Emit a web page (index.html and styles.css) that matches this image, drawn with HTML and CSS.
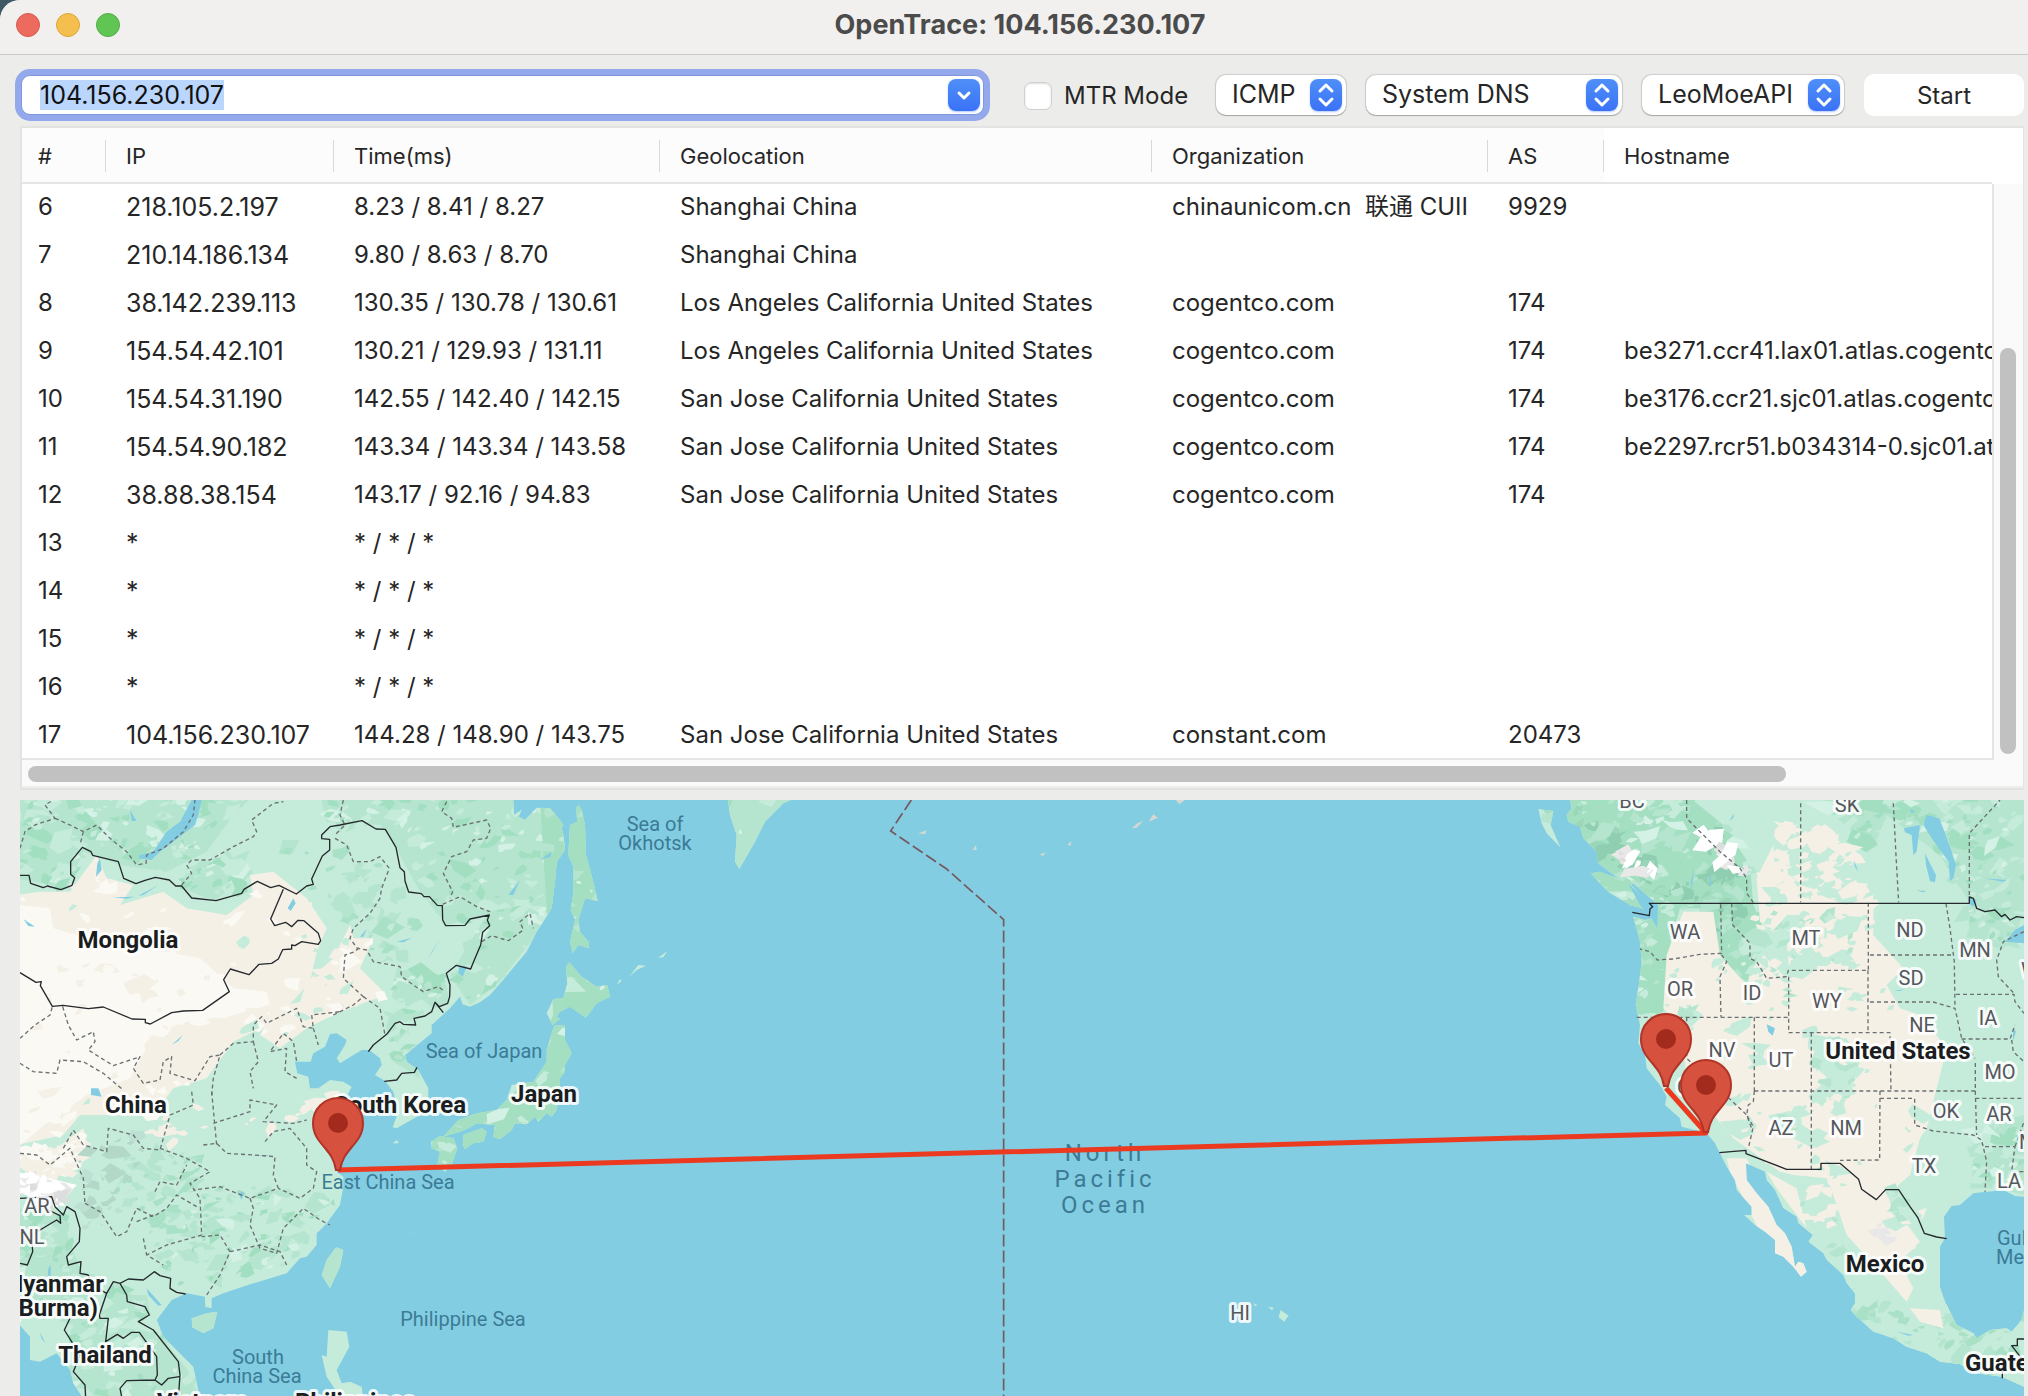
FILE: index.html
```html
<!DOCTYPE html>
<html lang="en">
<head>
<meta charset="utf-8">
<title>OpenTrace: 104.156.230.107</title>
<link rel="stylesheet" href="styles.css">
</head>
<body>
<div class="window">
  <header class="titlebar">
    <div class="lights">
      <button class="light light-close" aria-label="Close"></button>
      <button class="light light-min" aria-label="Minimize"></button>
      <button class="light light-zoom" aria-label="Zoom"></button>
    </div>
    <h1 class="title">OpenTrace: 104.156.230.107</h1>
  </header>

  <form class="toolbar" onsubmit="return false">
    <div class="combo">
      <input class="combo-input" id="target" type="text" value="104.156.230.107" aria-label="Target" autocomplete="off" spellcheck="false">
      <button class="knob" type="button" aria-label="History">
        <svg viewBox="0 0 32 32"><path d="M11 14l5 5 5-5"/></svg>
      </button>
    </div>
    <label class="check"><input class="check-box" type="checkbox"><span>MTR Mode</span></label>
    <div class="pick pick-protocol">
      <select aria-label="Protocol"><option>ICMP</option><option>TCP</option></select>
      <span class="knob"><svg viewBox="0 0 32 32"><path d="M10 12l6-6 6 6M10 20l6 6 6-6"/></svg></span>
    </div>
    <div class="pick pick-dns">
      <select aria-label="Resolver"><option>System DNS</option></select>
      <span class="knob"><svg viewBox="0 0 32 32"><path d="M10 12l6-6 6 6M10 20l6 6 6-6"/></svg></span>
    </div>
    <div class="pick pick-api">
      <select aria-label="Data source"><option>LeoMoeAPI</option></select>
      <span class="knob"><svg viewBox="0 0 32 32"><path d="M10 12l6-6 6 6M10 20l6 6 6-6"/></svg></span>
    </div>
    <button class="start" type="submit">Start</button>
  </form>

  <section class="panel">
    <div class="grid">
      <table class="hops">
        <colgroup><col class="c-no"><col class="c-ip"><col class="c-time"><col class="c-geo"><col class="c-org"><col class="c-as"><col></colgroup>
        <thead>
          <tr><th>#</th><th>IP</th><th>Time(ms)</th><th>Geolocation</th><th>Organization</th><th>AS</th><th>Hostname</th></tr>
        </thead>
        <tbody>
          <tr><td>6</td><td>218.105.2.197</td><td>8.23 / 8.41 / 8.27</td><td>Shanghai China</td><td>chinaunicom.cn&nbsp; 联通 CUII</td><td>9929</td><td></td></tr>
          <tr><td>7</td><td>210.14.186.134</td><td>9.80 / 8.63 / 8.70</td><td>Shanghai China</td><td></td><td></td><td></td></tr>
          <tr><td>8</td><td>38.142.239.113</td><td>130.35 / 130.78 / 130.61</td><td>Los Angeles California United States</td><td>cogentco.com</td><td>174</td><td></td></tr>
          <tr><td>9</td><td>154.54.42.101</td><td>130.21 / 129.93 / 131.11</td><td>Los Angeles California United States</td><td>cogentco.com</td><td>174</td><td>be3271.ccr41.lax01.atlas.cogentco.com</td></tr>
          <tr><td>10</td><td>154.54.31.190</td><td>142.55 / 142.40 / 142.15</td><td>San Jose California United States</td><td>cogentco.com</td><td>174</td><td>be3176.ccr21.sjc01.atlas.cogentco.com</td></tr>
          <tr><td>11</td><td>154.54.90.182</td><td>143.34 / 143.34 / 143.58</td><td>San Jose California United States</td><td>cogentco.com</td><td>174</td><td>be2297.rcr51.b034314-0.sjc01.atlas.cogentco.com</td></tr>
          <tr><td>12</td><td>38.88.38.154</td><td>143.17 / 92.16 / 94.83</td><td>San Jose California United States</td><td>cogentco.com</td><td>174</td><td></td></tr>
          <tr><td>13</td><td>*</td><td>* / * / *</td><td></td><td></td><td></td><td></td></tr>
          <tr><td>14</td><td>*</td><td>* / * / *</td><td></td><td></td><td></td><td></td></tr>
          <tr><td>15</td><td>*</td><td>* / * / *</td><td></td><td></td><td></td><td></td></tr>
          <tr><td>16</td><td>*</td><td>* / * / *</td><td></td><td></td><td></td><td></td></tr>
          <tr><td>17</td><td>104.156.230.107</td><td>144.28 / 148.90 / 143.75</td><td>San Jose California United States</td><td>constant.com</td><td>20473</td><td></td></tr>
        </tbody>
      </table>
    </div>
    <div class="vbar"><div class="vbar-head"></div><div class="vbar-track"><div class="vbar-thumb"></div></div></div>
    <div class="hbar"><div class="hbar-thumb"></div></div>
  </section>

  <main class="map">
    <svg class="map-svg" viewBox="20 800 2004 596" preserveAspectRatio="xMidYMid slice" role="img" aria-label="Route map">
      <defs>
        <clipPath id="land">
          <path d="M-10,0L1480,0 1480,15 1482,60 1505,45 1495,65 1515,75 1550,38 1590,40 1620,75 1630,90 1625,100 1630,120 1635,165 1610,200 1605,260 1595,340 1550,410 1520,470 1445,560 1410,600 1380,622 1350,635 1328,628 1320,605 1290,640 1235,690 1235,715 1155,780 1160,800 1195,825 1225,880 1225,925 1200,960 1130,1000 1118,997 1135,950 1120,890 1095,858 1065,840 1085,810 1080,790 1048,765 1025,765 960,805 950,790 975,750 980,735 950,715 930,718 915,755 880,775 872,800 825,800 832,835 865,845 870,880 895,880 930,855 970,860 995,875 985,895 940,930 905,960 930,1000 935,1060 960,1110 950,1130 970,1145 970,1175 960,1230 920,1285 890,1315 890,1350 860,1385 840,1390 800,1435 700,1465 610,1495 575,1510 575,1540 555,1535 555,1505 500,1495 455,1515 410,1575 430,1625 480,1675 520,1715 540,1810 190,1810 160,1765 150,1725 110,1675 60,1700 30,1695 30,1625 -10,1580Z"/>
          <path d="M1675,30L1685,45 1695,90 1698,180 1720,260 1733,318 1695,310 1675,375 1680,410 1705,440 1708,460 1675,450 1658,475 1650,440 1665,375 1652,345 1660,290 1660,215 1645,180 1650,90 1672,80 1668,40Z"/>
          <path d="M1648,502L1685,545 1730,575 1762,570 1770,605 1730,625 1698,668 1650,635 1620,650 1610,665 1620,672 1598,690 1580,655 1600,612 1630,610 1642,565 1638,515Z"/>
          <path d="M1598,705L1605,690 1635,692 1635,735 1655,775 1635,810 1635,830 1620,850 1620,900 1610,945 1595,965 1580,955 1555,980 1545,965 1520,988 1485,985 1475,1005 1440,1033 1420,1025 1425,990 1370,985 1345,1000 1320,1010 1270,1025 1315,975 1370,955 1430,945 1460,915 1475,870 1540,860 1580,800 1580,765Z"/>
          <path d="M1330,1020L1385,1000 1400,1010 1390,1040 1360,1045 1335,1063 1328,1050ZM1233,1040L1260,1023 1300,1030 1312,1060 1295,1110 1275,1130 1252,1110 1260,1070 1235,1060ZM1118,1045L1130,1035 1137,1045ZM1166,1320L1186,1305 1170,1318Z"/>
          <path d="M1790,570L1800,552 1805,558ZM1827,545L1855,510 1878,512 1850,525ZM1915,488L1942,468 1930,487Z"/>
          <path d="M2122,0L2345,0 2290,25 2235,80 2205,140 2158,222 2145,200 2150,120 2130,60Z"/>
          <path d="M515,1570L560,1555 592,1550 580,1600 550,1615 517,1597ZM948,1357L970,1365 960,1415 930,1480 905,1440 920,1395ZM925,1605L980,1610 988,1655 950,1725 965,1765 990,1760 1025,1775 1030,1810 965,1810 940,1775 920,1745 905,1680 920,1685Z"/>
          <path d="M4650,0L4650,15 4655,40 4640,60 4645,80 4680,95 4690,130 4730,170 4735,205 4775,235 4825,270 4840,265 4880,300 4915,330 4912,400 4900,370 4875,375 4840,365 4860,440 4865,500 4858,560 4847,630 4860,690 4855,745 4875,780 4880,820 4920,870 4940,905 4935,930 4980,970 4985,995 5060,1015 5085,1045 5100,1075 5120,1115 5145,1155 5150,1185 5195,1235 5195,1260 5172,1260 5205,1290 5235,1310 5265,1335 5265,1375 5290,1385 5320,1415 5343,1445 5360,1430 5350,1405 5335,1400 5325,1415 5315,1355 5295,1315 5270,1290 5245,1235 5210,1195 5180,1155 5178,1105 5235,1130 5240,1155 5265,1185 5290,1240 5330,1265 5335,1285 5378,1320 5365,1340 5410,1375 5420,1395 5470,1440 5480,1465 5505,1495 5505,1525 5492,1545 5510,1565 5560,1610 5620,1630 5660,1655 5720,1675 5760,1700 5820,1707 5870,1735 5945,1745 6012,1775 6012,1545 6005,1575 5975,1610 5960,1600 5910,1605 5870,1630 5860,1615 5810,1590 5775,1520 5760,1475 5760,1355 5775,1330 5772,1265 5795,1233 5820,1230 5860,1195 5900,1190 5950,1185 5985,1203 6012,1205 6012,0Z"/>
          <path d="M4713,235L4740,230 4780,245 4830,265 4860,300 4885,345 4830,330 4765,290 4735,260ZM4555,42L4600,48 4592,90 4622,158 4580,115 4565,85Z"/>
          <path d="M3782,1545L3806,1562 3792,1580 3776,1566ZM3745,1535L3762,1538 3756,1546ZM3700,1525L3712,1530 3705,1534Z"/>
        </clipPath>
        <g id="pin">
          <path class="pin-body" d="M-25 0A25 25 0 0 1 25 0C25 11 20 17 13 25C8 31 4 36 2 47L-2 47C-4 36-8 31-13 25C-20 17-25 11-25 0Z"/>
          <circle class="pin-dot" r="10"/>
        </g>
      </defs>

      <!-- terrain is drawn on a grid three times finer than the labels -->
      <g transform="translate(20 795) scale(.33333)">
        <g id="terrain" clip-path="url(#land)">
          <rect class="t-base" x="-20" width="6060" height="1820"/>
          <!-- woods -->
          <path class="t-wood" data-mix="wood" data-count="150" d="M-10,0L700,0 640,60 560,170 440,230 300,210 190,170 140,280 -10,250Z"/>
          <path class="t-wood" data-mix="wood" data-count="45" d="M500,220L620,180 700,230 640,290 560,310 490,280Z"/>
          <path class="t-wood" data-mix="wood" data-count="200" d="M900,0L1480,0 1650,120 1600,350 1440,560 1350,630 1290,540 1400,360 1280,390 1200,290 1090,90 920,80Z"/>
          <path class="t-mid" data-mix="wood" data-count="50" d="M1130,520L1270,540 1290,620 1160,680 1200,850 1120,800 1100,700Z"/>
          <path data-mix="woodlight" data-count="80" d="M740,100L1060,160 1200,400 1160,560 960,400 860,250Z"/>
          <path data-mix="woodlight" data-count="120" d="M280,1070L560,1070 540,1180 620,1280 520,1380 420,1400 360,1250 260,1180Z"/>
          <path data-mix="wood" data-count="140" d="M520,1160L880,1160 940,1220 830,1400 640,1460 420,1480 440,1330Z"/>
          <path class="t-wood" data-mix="wood" data-count="90" d="M-10,1240L120,1260 180,1420 240,1500 320,1590 280,1630 130,1580 -10,1560Z"/>
          <path class="t-mid" data-mix="wood" data-count="90" d="M280,1460L380,1500 400,1600 500,1720 540,1810 160,1810 150,1630Z"/>
          <path class="t-leaf" data-mix="wood" data-count="50" d="M1560,20L1780,20 1780,700 1660,960 1230,1140 1240,1000 1480,900 1600,660Z"/>
          <path class="t-wood" data-mix="wood" data-count="14" d="M890,1350L980,1350 980,1480 890,1480ZM500,1545L600,1545 600,1620 500,1620ZM2120,0L2350,0 2150,230Z"/>
          <path class="t-leaf" data-mix="wood" data-count="220" d="M4540,0L5000,0 5110,90 5190,210 5200,330 5240,420 5180,560 5090,500 5080,340 4980,340 4950,450 4930,650 4840,660 4820,370 4700,240Z"/>
          <path class="t-leaf" data-mix="deep" data-count="100" d="M4660,40L4780,110 4930,250 5020,200 5040,40 5150,200 5190,320 5120,460 5040,330 4960,330 4820,240 4690,130Z"/>
          <path class="t-mid" data-mix="wood" data-count="150" d="M5340,0L6012,0 6012,350 5860,340 5760,180 5600,60 5560,160 5440,60Z"/>
          <path class="t-mid" data-mix="wood" data-count="40" d="M5840,330L6012,360 6012,440 5930,460 5850,420Z"/>
          <path class="t-mid" data-mix="wood" data-count="50" d="M5880,1000L6012,960 6012,1200 5940,1180 5850,1180Z"/>
          <path class="t-base" data-mix="woodlight" data-count="90" d="M5480,1440L5700,1600 5780,1500 5870,1620 6012,1560 6012,1780 5700,1690 5500,1560Z"/>
          <!-- steppe and desert -->
          <path class="t-sand" data-mix="sand" data-count="150" d="M-10,300L60,290 150,290 230,180 260,250 340,270 300,330 430,290 500,340 620,360 700,300 690,240 760,230 860,310 920,400 890,470 870,560 800,640 720,700 640,740 560,850 460,880 400,960 180,960 130,1020 -10,1050Z"/>
          <path class="t-pale" data-mix="pale" data-count="90" d="M-10,330L90,340 100,400 300,460 430,470 540,490 640,580 740,590 750,630 640,660 500,680 380,760 330,850 200,900 60,1000 -10,1060Z"/>
          <path class="t-sand" data-mix="sand" data-count="40" d="M760,640L840,620 860,560 940,490 990,390 1000,430 1060,430 1020,520 1100,600 1040,620 940,660 860,700 780,760 720,720Z"/>
          <path class="t-sand" data-mix="pale" data-count="70" d="M-10,1060L110,1060 190,1000 210,1080 160,1130 60,1160 -10,1110Z"/>
          <path class="t-snow" data-mix="snow" data-count="60" d="M-10,1130L80,1150 140,1210 100,1230 -10,1190Z"/>
          <path data-mix="sandbits" data-count="30" d="M380,950L1000,880 900,1000 640,1000 560,1100 400,1020Z"/>
          <path data-mix="gray" data-count="45" d="M180,1070L380,1010 400,1080 320,1220 280,1340 180,1300Z"/>
          <path class="t-sand" data-mix="sandgreen" data-count="170" d="M4990,350L5080,350 5100,480 5180,570 5230,480 5310,560 5300,440 5220,380 5210,250 5260,150 5270,290 5400,300 5480,330 5560,300 5560,420 5650,520 5600,570 5640,640 5700,660 5780,760 5750,880 5720,1000 5700,1030 5670,1140 5600,1200 5640,1260 5700,1340 5640,1400 5680,1480 5660,1520 5590,1440 5480,1320 5430,1170 5360,1150 5280,1130 5140,1030 5080,960 5000,880 4990,700 4930,640 4940,480Z"/>
          <path class="t-sand" d="M5120,1090L5180,1090 5250,1240 5380,1430 5340,1450 5260,1400 5190,1250 5130,1130ZM5240,1130L5330,1180 5360,1300 5270,1180Z"/>
          <path data-mix="light" data-count="90" d="M5200,340L5560,340 5540,520 5320,520 5300,700 5180,640Z"/>
          <path class="t-base" data-mix="light" data-count="70" d="M5390,730L5480,730 5520,800 5460,960 5400,870 5380,790ZM5320,1140L5420,1150 5460,1300 5500,1400 5440,1380 5350,1240Z"/>
          <path class="t-base" data-mix="light" data-count="40" d="M5260,960L5300,950 5360,1000 5430,1040 5380,1060 5260,1000ZM5600,1180L5660,1180 5680,1270 5620,1260ZM4990,640L5050,660 5010,700 4970,700Z"/>
          <path data-mix="sandbits" data-count="130" d="M5270,90L5420,100 5500,180 5560,300 5560,340 5240,330Z"/>
          <path class="t-sand" d="M5670,1540L5760,1545 5770,1600 5700,1580Z"/>
          <path data-mix="snow" data-count="26" d="M4780,160L4840,190 4910,230 4920,250 4870,240 4790,200ZM5040,90L5100,150 5180,220 5170,240 5110,200 5060,150Z"/>
          <path data-mix="snow" data-count="4" d="M5570,1270L5610,1290 5610,1350 5580,1330Z"/>
        </g>
        <!-- lakes -->
        <path class="water" d="M515,15L545,15 535,60 525,90 460,140 420,170 395,195 355,190 360,180 400,170 440,110 480,80ZM330,45L350,78 335,78ZM240,190L245,225 228,245 232,205ZM355,302L415,270 370,300ZM280,307L345,305 320,311ZM803,340L820,310 827,325 812,348ZM10,372L45,395 25,393ZM455,750L488,720 475,738ZM213,880L235,880 245,905 213,900ZM1225,490L1262,430 1235,470ZM1130,440L1176,428 1150,442ZM1318,512L1340,515 1328,545 1315,535ZM1465,300L1500,255 1480,300ZM1560,195L1594,170 1592,185ZM1020,425L1040,402 1030,425ZM380,1480L425,1530 415,1532 385,1500ZM655,1195L672,1190 665,1215ZM690,1080L750,1080 740,1083ZM85,1420L92,1410 92,1450 84,1440ZM60,1612L76,1645 64,1630Z"/>
        <path class="water" d="M5720,60L5758,70 5785,140 5808,210 5800,250 5790,258 5786,200 5735,130 5710,90ZM5652,100L5700,90 5690,170 5680,180 5675,120 5655,112ZM5715,175L5735,215 5748,240 5745,262 5730,258 5718,210ZM5502,195L5515,230 5505,215ZM5670,40L5685,50 5675,55ZM5690,286L5720,288 5708,292ZM5850,308L5870,315 5860,335 5848,328ZM6012,390L5985,405 5955,440 6012,445ZM4825,265L4860,300 4890,320 4912,345 4912,400 4895,370 4860,330ZM5240,688L5265,700 5258,722 5245,710ZM5013,260L5022,220 5015,290ZM5070,230L5075,270 5068,272ZM5128,78L5142,55 5140,68ZM5890,250L5960,255 5950,260ZM5980,700L5988,710 5978,740ZM5620,588L5655,582 5640,588ZM5630,1610L5680,1620 5665,1622Z"/>
        <!-- Aleutian chain -->
        <path class="isle" d="M2695,115L2720,106 2715,118ZM2858,165L2868,150 2870,165ZM3060,178L3078,172 3068,184ZM3142,150L3154,138 3152,152ZM3336,100L3352,85 3370,78 3350,98ZM3386,80L3400,58 3414,68 3400,74ZM3468,15L3495,15 3478,28Z"/>

        <!-- state and province lines -->
        <path class="dash" d="M0,160L15,110 45,90 105,70 75,30 100,15M105,70L150,90 190,110 230,90 270,130 320,170 350,210 378,205 380,180 430,160 490,110 520,60 525,15M190,110L180,150M485,270L515,235 500,210 515,195 570,195 640,155 700,125 710,110 695,75 760,25 790,20M945,130L980,150 1000,200 1050,200 1080,185 1108,220 1085,280 1080,310 1050,355 1000,400 990,430 1012,460 1040,465 1060,500 1140,515 1145,545 1180,570 1210,590 1255,575 1275,590M970,15L960,60 975,90 945,120M1280,20L1265,50 1295,70 1300,97 1400,75 1412,100 1400,130 1360,135 1340,170 1295,185 1270,235 1298,290 1290,310M1268,328L1320,305 1370,335 1410,350M1385,440L1415,422 1465,437 1510,405 1500,380 1530,355 1540,400"/>
        <path class="dash" d="M0,730L45,690 90,660 97,635M128,635L145,690 170,735 220,710 225,740 205,765 280,812 360,785 340,820 370,865 420,855 430,800 455,785 450,835 525,857 570,785 600,780 580,850 575,900M0,805L40,830 110,835 120,795 190,800 250,835 310,885M600,780L640,745 700,740 700,690 725,665 740,685 830,640 850,695 880,700 875,660 960,650M700,740L715,800 690,830 700,880M880,700L895,750M830,850L795,830 800,760 750,770 790,715 820,740 830,800M940,660L1000,630 1030,605 970,550 975,480 1005,470 1020,455M1030,605L1080,640 1095,720"/>
        <path class="dash" d="M130,1060L160,1005 190,1050 260,1070 265,1000 340,1020 370,1060 420,1065 450,960 520,930 515,890M420,1060L500,1090 570,1130 510,1165 540,1210 545,1320 440,1350 380,1380 430,1410M0,1075L50,1080 90,1110 150,1060 190,1150 195,1230M195,1225L240,1250 290,1325 320,1310 350,1240 400,1265 440,1240 470,1200 530,1235M550,1050L590,1045 620,1075 700,1080 765,1085 760,1140 775,1180 690,1210 600,1175 520,1185M575,890L590,1050M580,985L690,950 690,915 770,930 730,980 820,985 860,975M735,1040L760,1010 810,1000 860,1060 860,1110 890,1130 880,1180 840,1210 775,1180M690,1210L700,1240 690,1290 720,1360 770,1375 790,1300 850,1240 900,1275 930,1290M560,1500L600,1440 630,1370 600,1320 545,1325M630,1370L720,1350 780,1370 800,1410M370,1330L380,1380M350,1280L400,1260M405,1190L420,1160 470,1170 500,1110"/>
        <path class="dash" d="M5000,15L5000,70 5050,120 5100,170 5160,220 5180,250 5180,295 5200,322M5342,25V322M5620,25L5628,180 5636,322M5848,300V115L5940,15M5102,328L5105,475 5040,478 4960,492 4912,495 4890,470 4860,462M5105,480L5120,500 5100,545 5103,665M5135,325L5138,390 5190,445 5190,490 5210,500 5240,550 5300,545 5305,526 5545,526 5545,325M4850,667H5306M5203,667V888M5203,888H5866V795M5000,667V790L5170,950 5180,960 5195,1000M5203,888L5200,920 5185,930 5180,960 5200,995 5185,1060M5306,545V713L5610,713 5613,888M5374,713V1122M5544,526V713M5550,480H5798M5550,621H5740L5805,640 5825,730 5865,790M5778,325L5790,400 5803,500 5805,640M5808,598H5982L5985,620 6012,655M5825,732H5970L5985,690M6012,410L5950,440 5930,495 5935,545 5982,595M5975,735L5980,770 6012,800M5580,888L5579,1095 5460,1096M5580,910H5684V990L5740,1008 5860,1020 5885,1035 5900,1100 5895,1190M5866,888L5870,1020M5866,910H6012M5895,1055H5985L5975,1130H6012M5985,1055L6012,980"/>

        <!-- national borders -->
        <path class="border" d="M0,241L27,241 32,265 70,278 82,273 123,284 156,271 164,248 152,238 152,200 187,157 213,170 218,181 295,200 311,250 348,266 375,256 406,247 448,255 467,273 485,273 515,309 588,317 665,295 672,283 712,259 752,278 777,271 829,297 860,273 880,268 875,252 907,183 929,165 929,133 905,131 905,120 930,95 960,90 1026,77 1068,102 1096,103 1128,157 1140,218 1153,230 1155,258 1166,291 1204,296 1212,305 1228,305 1252,331 1267,332 1268,375 1277,392 1335,391 1350,372 1408,360 1402,375 1409,392 1388,412 1382,450 1362,497 1352,522 1309,511 1279,535 1290,570 1289,605 1283,625 1258,635 1245,622 1235,650 1215,663 1182,670 1187,690 1150,688 1140,680 1125,685 1100,718 1060,750 1045,770M1245,622L1270,653M790,283L752,372 764,392 797,382 815,395 834,376 852,377 895,415 902,437 895,448 845,440 825,452 815,450 815,462 788,464 775,492 755,505 717,508 687,539 631,522 611,554 628,590 548,646 490,648 455,653 391,687 376,683 376,673 336,672 250,636 205,641 129,631 97,634 61,572 64,560 48,562 0,533M1093,859L1130,855 1145,835 1183,832 1191,817"/>
        <path class="border" d="M0,1210L95,1205 105,1235 130,1260 140,1235 165,1250 180,1300 178,1340 140,1385 145,1410 183,1400 180,1435 205,1440M0,1405L22,1410 38,1370 35,1320 60,1305 110,1275 122,1285 120,1262 85,1245M205,1440L215,1470 260,1495 280,1460 300,1465 325,1452 370,1455 403,1430 420,1442 452,1450 450,1480 470,1492 497,1497M260,1495L238,1560 240,1570 265,1570 257,1640 292,1618 310,1630 335,1612 358,1612 410,1685 412,1740 405,1755 320,1757 300,1780 305,1805M405,1755L425,1770 445,1750 478,1745M300,1465L320,1500 322,1520 375,1535 388,1560 355,1580 400,1605 475,1700 480,1740 475,1810M150,1570L133,1605 155,1640 180,1680 160,1730 195,1770 197,1810"/>
        <path class="border" d="M4837,352L4888,362 4890,342 4898,335 4888,325H5848V306L5860,310 5870,340 5895,350 5925,345 5945,365 5955,358 5970,375 5990,365 6012,368M5098,1073L5178,1066 5178,1076 5300,1123H5403V1105H5460L5516,1153 5525,1183 5569,1214 5597,1184H5636L5670,1235 5693,1267 5713,1315 5750,1326 5780,1331M6012,1632H5992V1652H5975L6005,1690M5947,1700V1750"/>
        <path class="dateline" d="M2674,15L2612,108 2780,222 2951,374V1810"/>
      </g>

      <g class="sea">
        <text x="655" y="831">Sea of</text><text x="655" y="850">Okhotsk</text>
        <text x="484" y="1058">Sea of Japan</text>
        <text x="388" y="1189">East China Sea</text>
        <text x="463" y="1326">Philippine Sea</text>
        <text x="258" y="1364">South</text><text x="257" y="1383">China Sea</text>
        <text class="from" x="1997" y="1245">Gulf of</text><text class="from" x="1996" y="1264">Mexico</text>
      </g>
      <g class="ocean">
        <text x="1105" y="1161">North</text><text x="1105" y="1187">Pacific</text><text x="1105" y="1213">Ocean</text>
      </g>
      <g class="state">
        <text x="1632" y="808">BC</text><text x="1847" y="812">SK</text>
        <text x="1685" y="939">WA</text><text x="1680" y="996">OR</text><text x="1752" y="1000">ID</text>
        <text x="1722" y="1057">NV</text><text x="1690" y="1094">CA</text><text x="1781" y="1067">UT</text>
        <text x="1806" y="945">MT</text><text x="1910" y="937">ND</text><text x="1911" y="985">SD</text>
        <text x="1975" y="957">MN</text><text x="1827" y="1008">WY</text><text x="1922" y="1032">NE</text>
        <text x="1988" y="1025">IA</text><text x="2000" y="1079">MO</text><text class="from" x="2021" y="977">WI</text>
        <text x="1781" y="1135">AZ</text><text x="1846" y="1135">NM</text><text x="1946" y="1118">OK</text>
        <text x="1999" y="1121">AR</text><text x="1924" y="1173">TX</text><text x="2009" y="1188">LA</text>
        <text class="from" x="2019" y="1149">MS</text><text x="1240" y="1320">HI</text>
        <text x="37" y="1213">AR</text><text x="32" y="1244">NL</text>
      </g>
      <g class="country">
        <text x="128" y="948">Mongolia</text><text x="136" y="1113">China</text>
        <text x="400" y="1113">South Korea</text><text x="544" y="1102">Japan</text>
        <text class="to" x="104" y="1292">Myanmar</text><text class="to" x="98" y="1316">(Burma)</text>
        <text x="105" y="1363">Thailand</text><text x="202" y="1410">Vietnam</text><text x="355" y="1410">Philippines</text>
        <text x="1898" y="1059">United States</text><text x="1885" y="1272">Mexico</text>
        <text class="from" x="1965" y="1371">Guatemala</text>
      </g>

      <path class="route" d="M338,1170L1706,1133 1666,1088"/>
      <use href="#pin" x="1666" y="1039"/>
      <use href="#pin" x="1706" y="1085"/>
      <use href="#pin" x="338" y="1123"/>
    </svg>
  </main>
</div>
<script src="app.js"></script>
</body>
</html>
```
FILE: styles.css
```css
* { box-sizing: border-box; }

html, body { height: 100%; }

body {
  margin: 0;
  background: #3f5a66;
  color: #262626;
  font: 24px/30px Inter, "Noto Sans CJK SC", sans-serif;
}

button, input, select { font: inherit; color: inherit; }

.window {
  display: flex;
  flex-direction: column;
  height: 100%;
  background: #ececea;
  border-top-left-radius: 20px;
  overflow: hidden;
}

/* title bar */
.titlebar {
  display: grid;
  grid-template-columns: 1fr auto 1fr;
  align-items: center;
  height: 55px;
  padding: 0 4px 4px 16px;
  background: #f1f0ee;
  border-bottom: 1px solid #c9c9c8;
  flex: none;
}
.lights { display: flex; gap: 16px; }
.light { width: 24px; height: 24px; padding: 0; border: 1px solid; border-radius: 50%; }
.light-close { background: #ec6a5e; border-color: #d65a4f; }
.light-min { background: #f4bf4f; border-color: #dba63c; }
.light-zoom { background: #61c554; border-color: #50ad44; }
.title {
  margin: 0;
  font-size: 27px;
  line-height: 30px;
  font-weight: 700;
  color: #4b4b4b;
}

/* toolbar */
.toolbar {
  display: flex;
  align-items: center;
  gap: 20px;
  padding: 19px 4px 10px 21px;
  flex: none;
}
.combo {
  display: flex;
  flex: 1;
  align-items: center;
  height: 40px;
  margin: 0 20px 0 0;
  padding: 0 3px 0 18px;
  background: #fff;
  border: 1px solid #7f96dd;
  border-radius: 9px;
  box-shadow: 0 0 0 6px #94a9ec;
}
.combo-input {
  flex: 1;
  min-width: 0;
  height: 30px;
  padding: 0;
  border: 0;
  outline: 0;
  background: none;
  color: #111;
  font-size: 25px;
}
.combo-input::selection { background: #bad6fd; color: #111; }

.knob {
  display: block;
  width: 32px;
  height: 32px;
  padding: 0;
  border: 0;
  border-radius: 8px;
  background: linear-gradient(#4f8ff8, #3a72f6);
  box-shadow: 0 1px 2px #3a72f666;
}
.knob svg { display: block; width: 32px; height: 32px; fill: none; stroke: #fff; stroke-width: 3; stroke-linecap: round; stroke-linejoin: round; }

.check { display: flex; align-items: center; gap: 12px; width: 172px; height: 42px; padding-top: 2px; white-space: nowrap; }
.check-box {
  appearance: none;
  width: 28px;
  height: 28px;
  margin: 0;
  background: #fff;
  border: 1px solid #cfcfcf;
  border-radius: 7px;
  box-shadow: inset 0 1px 2px #0002;
}

.pick { position: relative; }
.pick select {
  appearance: none;
  display: block;
  width: 100%;
  height: 40px;
  padding: 0 40px 2px 16px;
  background: #fff;
  border: 0;
  border-radius: 10px;
  box-shadow: 0 0 1px 1px #0002, 0 1px 1px #0003;
  font-size: 25px;
}
.pick .knob { position: absolute; top: 4px; right: 4px; pointer-events: none; }
.pick-protocol { width: 130px; }
.pick-dns { width: 256px; }
.pick-api { width: 202px; }
.start { width: 160px; height: 42px; padding: 2px 0 0; background: #fff; border: 0; border-radius: 10px; }

/* hop table */
.panel {
  display: grid;
  grid-template-columns: minmax(0, 1fr) 31px;
  grid-template-rows: auto 28px;
  margin: 0 4px 0 20px;
  border: 2px solid #e3e3e2;
  border-right-width: 1px;
  background: #fafafa;
  flex: none;
}
.grid { overflow: hidden; background: #fff; border-bottom: 2px solid #e5e5e5; }
.hops { width: 100%; table-layout: fixed; border-collapse: separate; border-spacing: 0; }
.c-no { width: 84px; }
.c-ip { width: 228px; }
.c-time { width: 326px; }
.c-geo { width: 492px; }
.c-org { width: 336px; }
.c-as { width: 116px; }
.hops th {
  position: relative;
  height: 56px;
  padding: 2px 0 0 20px;
  border-bottom: 2px solid #e5e5e5;
  background: #fcfcfc;
  font-size: 22px;
  font-weight: 400;
  text-align: left;
}
.hops th:last-child { background: #fff; }
.hops th:not(:last-child)::after {
  content: "";
  position: absolute;
  top: 12px;
  right: 0;
  width: 1px;
  height: 32px;
  background: #d9d9d9;
}
.hops td { height: 48px; padding: 0 0 3px 20px; white-space: nowrap; overflow: hidden; }
.hops td:nth-child(2) { font-size: 25px; }
.hops tr:last-child td { height: 46px; padding-bottom: 1px; }
.hops th:first-child, .hops td:first-child { padding-left: 16px; }
.vbar { display: flex; flex-direction: column; }
.vbar-head { height: 56px; background: #fff; }
.vbar-track { flex: 1; padding: 164px 0 6px 6px; border-left: 2px solid #e5e5e5; }
.vbar-thumb { width: 16px; height: 100%; border-radius: 8px; background: #c1c1c1; }
.hbar { grid-column: 1 / -1; padding: 6px 6px 4px; border-bottom: 2px solid #ededed; }
.hbar-thumb { width: 88.4%; height: 16px; border-radius: 8px; background: #c1c1c1; }

/* map */
.map { flex: 1; min-height: 0; margin: 10px 4px 0 20px; background: #83cde3; overflow: hidden; }
.map-svg { display: block; width: 100%; height: 100%; }
.t-base { fill: #c5ebda; }
.t-mid, .t-wood { fill: #b5e5cf; }
.t-leaf { fill: #a4dfc2; }
.t-sand { fill: #f4f0e6; }
.t-pale { fill: #faf9f4; }
.t-snow { fill: #f4f3f2; }
#terrain path:not([class]) { fill: none; }
.water { fill: #83cde3; }
.isle { fill: #d3d8d3; }
.dash { fill: none; stroke: #6b7073; stroke-width: 4; stroke-dasharray: 12 9; stroke-linejoin: round; }
.border { fill: none; stroke: #25282c; stroke-width: 4; stroke-linejoin: round; }
.dateline { fill: none; stroke: #75595f; stroke-width: 5; stroke-dasharray: 36 12; }

.map-svg text {
  font-family: Roboto, sans-serif;
  text-anchor: middle;
  paint-order: stroke;
  stroke-linejoin: round;
}
.map-svg .from { text-anchor: start; }
.map-svg .to { text-anchor: end; }
.sea { font-size: 20px; fill: #3b7b95; }
.ocean { font-size: 24px; fill: #3b7b95; letter-spacing: 4px; }
.state { font-size: 20px; fill: #54575c; stroke: #fffd; stroke-width: 6px; }
.country { font-size: 24px; font-weight: 700; fill: #1b1d20; stroke: #fffd; stroke-width: 6px; }
.route { fill: none; stroke: #eb3a20; stroke-width: 5; stroke-linejoin: round; }
.pin-body { fill: #d7523e; stroke: #b03427; stroke-width: 2; }
.pin-dot { fill: #a22b1d; }
```
FILE: app.js
```js
const target = document.getElementById('target');
target.focus();
target.select();

// Break each terrain area up with small angular patches of its own palette.
const palettes = {
  wood: ['#c5ebda', '#a2dfc1', '#c5ebda', '#b5e5cf', '#b5e5cf', '#a2dfc1', '#b5e5cf', '#d3f1e4'],
  woodlight: ['#b5e5cf', '#b5e5cf', '#c5ebda', '#c5ebda', '#a9e1c6'],
  deep: ['#8fceb0', '#a2dfc1', '#8fceb0', '#b5e5cf', '#9bd6b8'],
  sand: ['#c5ebda', '#faf9f4', '#f4f0e6', '#f4f0e6', '#faf9f4'],
  pale: ['#f4f0e6', '#faf9f4', '#faf9f4'],
  snow: ['#ffffff', '#e9e8e8', '#dcdedd', '#ffffff'],
  gray: ['#b3d8c8', '#bce0d1', '#c5ebda'],
  sandgreen: ['#c5ebda', '#c5ebda', '#f4f0e6', '#f4f0e6', '#f4f0e6'],
  sandbits: ['#f4f0e6', '#f4f0e6', '#c5ebda'],
  light: ['#f4f0e6', '#c5ebda', '#c5ebda', '#b5e5cf']
};
let seed = 7;
const rnd = () => (seed = (seed * 16807) % 2147483647) / 2147483647;

document.querySelectorAll('#terrain [data-mix]').forEach(area => {
  const colors = palettes[area.dataset.mix];
  const box = area.getBBox();
  const svg = area.ownerSVGElement;
  let after = area;
  let left = Number(area.dataset.count);
  for (let tries = 0; left > 0 && tries < 3000; tries++) {
    const point = svg.createSVGPoint();
    point.x = box.x + rnd() * box.width;
    point.y = box.y + rnd() * box.height;
    if (!area.isPointInFill(point)) continue;
    left--;
    const size = 8 + rnd() * rnd() * 42;
    const tilt = -0.9 + rnd() * 1.4;
    const corners = [];
    const n = 4 + Math.floor(rnd() * 4);
    for (let i = 0; i < n; i++) {
      const a = i / n * Math.PI * 2;
      const r = size * (0.35 + rnd());
      const u = Math.cos(a) * r * 1.2, v = Math.sin(a) * r * 0.7;
      corners.push(Math.round(point.x + u * Math.cos(tilt) - v * Math.sin(tilt)) + ',' +
                   Math.round(point.y + u * Math.sin(tilt) + v * Math.cos(tilt)));
    }
    const patch = document.createElementNS('http://www.w3.org/2000/svg', 'polygon');
    patch.setAttribute('points', corners.join(' '));
    patch.setAttribute('fill', colors[Math.floor(rnd() * colors.length)]);
    after.after(patch);
    after = patch;
  }
});
```
